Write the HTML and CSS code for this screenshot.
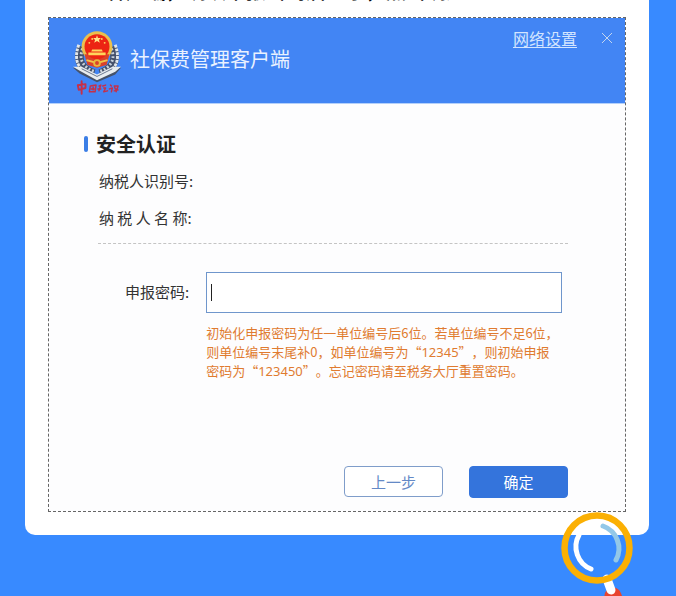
FILE: index.html
```
<!DOCTYPE html>
<html lang="zh-CN">
<head>
    <meta charset="UTF-8">
    <meta name="viewport" content="width=device-width, initial-scale=1">
    <title>社保费管理客户端</title>
    <link rel="stylesheet" href="styles.css">
</head>
<body>

<main class="card">
    <p class="intro">入客户端，确认申报密码后登录，点击确定</p>

    <section class="dialog">
        <header class="dialog-header">
            <svg class="emblem" viewBox="0 0 50 68" aria-hidden="true">
                <!-- wreath -->
                <g fill="none" stroke="#44506a" stroke-width="9">
                    <path d="M9 17C3 32 9 41 22 45"/>
                    <path d="M41 17C47 32 41 41 28 45"/>
                </g>
                <g fill="none" stroke="#e3e8ec" stroke-width="3" stroke-dasharray="3 1">
                    <path d="M6 15C0 32 6 42 19 45"/>
                    <path d="M44 15C50 32 44 42 31 45"/>
                </g>
                <g fill="none" stroke="#c9d2dc" stroke-width="3" stroke-dasharray="2 2">
                    <path d="M10 19C5 32 12 39 23 43"/>
                    <path d="M40 19C45 32 38 39 27 43"/>
                </g>
                <!-- ribbon -->
                <path d="M0 39l9-1 16 10 16-10 9 1-6 7-19 8L7 45z" fill="#46536b"/>
                <path d="M0 38l9 0 16 8 16-8 9 0-6 5-19 9L7 42z" fill="#e8edf0"/>
                <path d="M9 40l16 8 16-8" fill="none" stroke="#65728a" stroke-width="1"/>
                <!-- national emblem -->
                <circle cx="25" cy="17" r="16" fill="#eac04e"/>
                <path d="M12 25h26l-3 11-10 3-10-3z" fill="#d9422a"/>
                <path d="M14 31l11 3 11-3" fill="none" stroke="#f0c54a" stroke-width="2"/>
                <circle cx="25" cy="17" r="13" fill="#ec2413"/>
                <path d="M25 5l1 3h3l-2 2 1 3-3-2-3 2 1-3-2-2h3z" fill="#ffe58a"/>
                <g fill="#ffd45c">
                    <circle cx="17" cy="13" r="1"/>
                    <circle cx="20" cy="9" r="1"/>
                    <circle cx="30" cy="9" r="1"/>
                    <circle cx="33" cy="13" r="1"/>
                    <path d="M20 20h10l1 2H19zM16 23h18v3H16z"/>
                </g>
                <circle cx="25" cy="34" r="4" fill="#e8b83c"/>
                <circle cx="25" cy="34" r="2" fill="#d9422a"/>
                <!-- brush signature -->
                <g fill="none" stroke="#c5304a" stroke-linecap="round" stroke-linejoin="round">
                    <path d="M5 57l1 5 7-2v-4l-8 1M9 53v13" stroke-width="2"/>
                    <path d="M18 58l-1 6M18 58l6-1-1 7-5 0M19 61h3M21 59v3" stroke-width="1.5"/>
                    <path d="M27 58l2-1-2 6M26 61h3M31 58l3-1M32 60h2l-2 4 4-1" stroke-width="1.5"/>
                    <path d="M39 57l1 1M38 61l3-1-1 4M43 58h4l-1 3h-2zM43 63l4-1M45 61v3" stroke-width="1.5"/>
                </g>
            </svg>
            <h1 class="app-name">社保费管理客户端</h1>
            <a class="network-link" href="#">网络设置</a>
            <button class="close" type="button" aria-label="关闭">
                <svg viewBox="0 0 12 12" width="12" height="12" aria-hidden="true">
                    <path d="M1 1l10 10M11 1L1 11" fill="none" stroke="#c3d5ee" stroke-width="1"/>
                </svg>
            </button>
        </header>

        <form class="auth">
            <h2 class="auth-title">安全认证</h2>
            <div class="taxpayer">
                <p>纳税人识别号:</p>
                <p>纳 税 人 名 称:</p>
            </div>

            <div class="field">
                <label for="password">申报密码:</label>
                <div class="input-wrap">
                    <input id="password" type="password" aria-describedby="hint">
                    <span class="caret"></span>
                </div>
                <p class="hint" id="hint">初始化申报密码为任一单位编号后6位。若单位编号不足6位，<br>则单位编号末尾补0，如单位编号为“<span class="num">12345</span>”，则初始申报<br>密码为“<span class="num">123450</span>”。忘记密码请至税务大厅重置密码。</p>
            </div>

            <div class="actions">
                <button class="btn" type="button">上一步</button>
                <button class="btn btn-primary" type="submit">确定</button>
            </div>
        </form>
    </section>

    <svg class="magnifier" viewBox="0 0 76 90" width="76" height="90" aria-hidden="true">
        <path d="M54 85l10 28" stroke="#e8442f" stroke-width="17" stroke-linecap="round"/>
        <path d="M48 68l4 11" stroke="#fff" stroke-width="9" stroke-linecap="round"/>
        <circle cx="38" cy="37" r="32.5" fill="none" stroke="#fbb003" stroke-width="6.5"/>
        <path d="M20 24A24 24 0 0 0 32 58" fill="none" stroke="#fff" stroke-width="5" stroke-linecap="round"/>
        <path d="M44 15A24 24 0 0 1 57 49" fill="none" stroke="#93c8e8" stroke-width="5" stroke-linecap="round"/>
    </svg>
</main>

</body>
</html>
```
FILE: styles.css
```
* {
    box-sizing: border-box;
}

body {
    margin: 0;
    padding: 0 27px 0 25px;
    min-height: 100vh;
    overflow: hidden;
    background: #388aff;
    color: #333;
    font-family: "Noto Sans CJK SC", sans-serif;
    font-size: 15px;
}

h1, h2, p {
    margin: 0;
}

button, input {
    font: inherit;
}

.card {
    position: relative;
    padding: 0 23px 23px;
    background: #fff;
    border-radius: 0 0 10px 10px;
}

/* tail of the paragraph that is scrolled out above */
.intro {
    display: flex;
    align-items: flex-end;
    height: 17px;
    padding: 0 38px 12px;
    overflow: hidden;
    color: #000;
    font-size: 20px;
    font-weight: 500;
    line-height: 28px;
    white-space: nowrap;
}

.dialog {
    border: 1px dashed #666;
    background: #fdfdfe;
}

.dialog-header {
    display: flex;
    align-items: flex-start;
    height: 86px;
    padding: 12px 12px 0 24px;
    background: #4285f4;
    border-bottom: 1px solid #b4d0fa;
}

.emblem {
    width: 48px;
    height: 66px;
}

.app-name {
    margin-left: 9px;
    padding-top: 14px;
    color: #eaf2ff;
    font-size: 20px;
    font-weight: 400;
    line-height: 30px;
}

.network-link {
    margin-left: auto;
    color: #d3e5ff;
    font-size: 16px;
    line-height: 16px;
    text-underline-offset: 2px;
}

.close {
    display: flex;
    margin-left: 24px;
    padding: 2px 0;
    border: 0;
    background: none;
}

.auth {
    padding: 25px 57px 13px 35px;
}

.auth-title {
    display: flex;
    align-items: center;
    gap: 8px;
    color: #222;
    font-size: 20px;
    line-height: 30px;
}

.auth-title::before {
    content: "";
    width: 4px;
    height: 16px;
    border-radius: 2px;
    background: #3b7ee6;
}

.taxpayer {
    display: grid;
    gap: 14px;
    margin-left: 14px;
    padding: 10px 0 14px 1px;
    border-bottom: 1px dashed #c4c4c4;
    line-height: 23px;
}

.field {
    display: grid;
    grid-template-columns: auto 1fr;
    column-gap: 17px;
    align-items: center;
    margin: 28px 6px 0 41px;
}

.field label {
    padding-bottom: 2px;
}

.input-wrap {
    position: relative;
}

.input-wrap input {
    display: block;
    width: 100%;
    height: 41px;
    padding: 0 6px;
    border: 1px solid #6f96cc;
    background: #fff;
    outline: none;
}

.caret {
    position: absolute;
    top: 12px;
    left: 5px;
    width: 1px;
    height: 17px;
    background: #222;
}

.hint {
    grid-column: 2;
    margin-top: 10px;
    color: #e07b30;
    font-size: 13px;
    line-height: 19px;
    white-space: nowrap;
    text-spacing-trim: space-all;
}

.num {
    font-family: "Noto Sans", sans-serif;
    line-height: 1;
}

.actions {
    display: flex;
    justify-content: flex-end;
    align-items: flex-start;
    gap: 26px;
    margin-top: 86px;
}

.btn {
    width: 99px;
    height: 31px;
    padding: 0;
    border: 1px solid #7f9dca;
    border-radius: 4px;
    background: #fff;
    color: #6489c6;
    line-height: 28px;
}

.btn-primary {
    height: 32px;
    border-color: #3474dc;
    background: #3474dc;
    color: #fff;
}

.magnifier {
    position: absolute;
    right: 14px;
    bottom: -66px;
}
```
